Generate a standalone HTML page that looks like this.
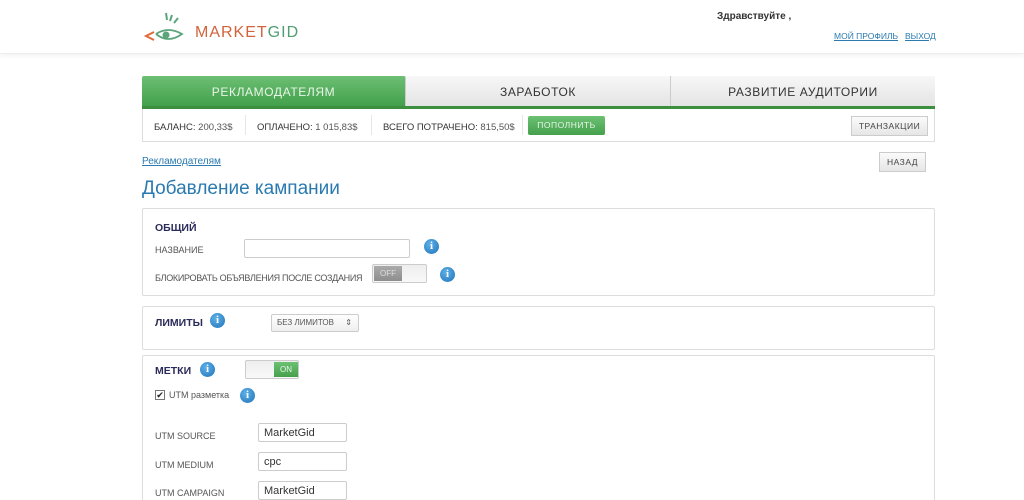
<!DOCTYPE html>
<html><head><meta charset="utf-8"><style>
*{box-sizing:border-box;margin:0;padding:0}
html,body{width:1024px;height:500px;overflow:hidden}
body{background:#fff;font-family:"Liberation Sans","DejaVu Sans",sans-serif;position:relative;color:#444}
.a{position:absolute}
.hdr{left:0;top:0;width:1024px;height:54px;background:#fff;border-bottom:1px solid #eee;box-shadow:0 2px 4px #f2f2f2}
.tab{top:76px;height:30px;font-size:12px;letter-spacing:.6px;text-align:center;line-height:32px;background:linear-gradient(#f7f7f7,#e4e4e4);color:#333;border-right:1px solid #ccc}
.info{width:15px;height:15px;border-radius:50%;background:radial-gradient(circle at 40% 35%,#5fb1e8,#1f73b8);color:#fff;font-size:11px;font-weight:bold;text-align:center;line-height:15px;font-family:"Liberation Serif",serif}
.panel{left:142px;width:793px;border:1px solid #ddd;border-radius:2px;background:#fff}
.lbl{font-size:9px;color:#555}
.ttl{font-size:10.5px;font-weight:bold;color:#2b2b5a}
.inp{border:1px solid #ccc;border-radius:2px;height:19px;background:#fff;font-size:11px;padding:3px 5px;color:#333}
.btn{border:1px solid #ccc;background:linear-gradient(#fbfbfb,#e6e6e6);font-size:8.5px;color:#444;text-align:center;letter-spacing:.5px}
</style></head><body>
<div class="a hdr"></div>
<svg class="a" style="left:142px;top:10px" width="48" height="36" viewBox="0 0 48 36">
<path d="M12 22 L4 26 L12 30" fill="none" stroke="#e06a3c" stroke-width="2"/>
<path d="M14 24 Q26 16 40 24 Q26 34 14 24" fill="none" stroke="#5aa57a" stroke-width="1.8"/>
<circle cx="24" cy="25" r="3.5" fill="#5aa57a"/>
<path d="M24 3 L25 10 M30 5 L28 11 M36 8 L32 13" stroke="#5aa57a" stroke-width="2"/>
</svg>
<div class="a" style="left:195px;top:24px;font-size:16px;letter-spacing:1px;color:#d2633c">MARKET<span style="color:#4f9d73">GID</span></div>
<div class="a" style="left:717px;top:11px;font-size:10px;font-weight:bold;color:#333">Здравствуйте ,</div>
<div class="a" style="left:834px;top:31px;font-size:8.5px;color:#2a7ab0;text-decoration:underline">МОЙ ПРОФИЛЬ</div>
<div class="a" style="left:905px;top:31px;font-size:8.5px;color:#2a7ab0;text-decoration:underline">ВЫХОД</div>

<div class="a tab" style="left:142px;width:264px;background:linear-gradient(#6cbf73,#43a04b);color:#e8f5e8;border-radius:2px 2px 0 0">РЕКЛАМОДАТЕЛЯМ</div>
<div class="a tab" style="left:406px;width:265px">ЗАРАБОТОК</div>
<div class="a tab" style="left:671px;width:264px;border-right:none">РАЗВИТИЕ АУДИТОРИИ</div>
<div class="a" style="left:142px;top:106px;width:793px;height:3px;background:#3c8f3f"></div>
<div class="a" style="left:142px;top:109px;width:793px;height:33px;border:1px solid #ddd;border-top:none;background:#fff"></div>
<div class="a" style="left:154px;top:122px;font-size:9.5px;color:#333">БАЛАНС: <span style="color:#555">200,33$</span></div>
<div class="a" style="left:245px;top:115px;width:1px;height:20px;background:#e6e6e6"></div>
<div class="a" style="left:257px;top:122px;font-size:9.5px;color:#333">ОПЛАЧЕНО: <span style="color:#555">1 015,83$</span></div>
<div class="a" style="left:371px;top:115px;width:1px;height:20px;background:#e6e6e6"></div>
<div class="a" style="left:383px;top:122px;font-size:9.5px;color:#333">ВСЕГО ПОТРАЧЕНО: <span style="color:#555">815,50$</span></div>
<div class="a" style="left:522px;top:115px;width:1px;height:20px;background:#e6e6e6"></div>
<div class="a" style="left:528px;top:116px;width:77px;height:19px;background:linear-gradient(#6cc173,#45a04c);border-radius:2px;color:#e6f5e6;font-size:8.5px;text-align:center;line-height:19px;letter-spacing:.5px">ПОПОЛНИТЬ</div>
<div class="a btn" style="left:851px;top:116px;width:77px;height:20px;line-height:18px">ТРАНЗАКЦИИ</div>

<div class="a" style="left:142px;top:156px;font-size:10px;color:#2a7ab0;text-decoration:underline">Рекламодателям</div>
<div class="a btn" style="left:879px;top:152px;width:47px;height:20px;line-height:18px">НАЗАД</div>
<div class="a" style="left:142px;top:178px;font-size:19px;color:#2a7ab0">Добавление кампании</div>

<div class="a panel" style="top:208px;height:88px"></div>
<div class="a ttl" style="left:155px;top:222px">ОБЩИЙ</div>
<div class="a lbl" style="left:155px;top:245px">НАЗВАНИЕ</div>
<div class="a inp" style="left:244px;top:239px;width:166px"></div>
<div class="a info" style="left:424px;top:239px">i</div>
<div class="a lbl" style="left:155px;top:273px;letter-spacing:-.3px">БЛОКИРОВАТЬ ОБЪЯВЛЕНИЯ ПОСЛЕ СОЗДАНИЯ</div>
<div class="a" style="left:372px;top:264px;width:55px;height:19px;border:1px solid #ccc;border-radius:2px;background:linear-gradient(#eee,#f8f8f8)"></div>
<div class="a" style="left:374px;top:266px;width:28px;height:15px;background:linear-gradient(#aaa,#8e8e8e);color:#ddd;font-size:8px;text-align:center;line-height:15px">OFF</div>
<div class="a info" style="left:440px;top:267px">i</div>

<div class="a panel" style="top:306px;height:44px"></div>
<div class="a ttl" style="left:155px;top:317px">ЛИМИТЫ</div>
<div class="a info" style="left:210px;top:313px">i</div>
<div class="a" style="left:271px;top:314px;width:88px;height:18px;border:1px solid #ccc;border-radius:2px;background:linear-gradient(#fff,#eee);font-size:8px;color:#555;line-height:16px;padding-left:5px">БЕЗ ЛИМИТОВ <span style="position:absolute;right:6px">&#8661;</span></div>

<div class="a panel" style="top:355px;height:160px"></div>
<div class="a ttl" style="left:155px;top:365px">МЕТКИ</div>
<div class="a info" style="left:200px;top:362px">i</div>
<div class="a" style="left:245px;top:360px;width:54px;height:19px;border:1px solid #ccc;border-radius:2px;background:linear-gradient(#eee,#f8f8f8)"></div>
<div class="a" style="left:274px;top:362px;width:24px;height:15px;background:linear-gradient(#6cc173,#45a04c);color:#e6f5e6;font-size:8px;text-align:center;line-height:15px">ON</div>
<div class="a" style="left:155px;top:390px;width:10px;height:10px;border:1px solid #777;background:#fff;font-size:9px;line-height:8px;text-align:center;color:#222">✔</div>
<div class="a lbl" style="left:169px;top:390px">UTM разметка</div>
<div class="a info" style="left:240px;top:388px">i</div>
<div class="a lbl" style="left:155px;top:431px">UTM SOURCE</div>
<div class="a inp" style="left:258px;top:423px;width:89px">MarketGid</div>
<div class="a lbl" style="left:155px;top:460px">UTM MEDIUM</div>
<div class="a inp" style="left:258px;top:452px;width:89px">cpc</div>
<div class="a lbl" style="left:155px;top:488px">UTM CAMPAIGN</div>
<div class="a inp" style="left:258px;top:481px;width:89px">MarketGid</div>
</body></html>
